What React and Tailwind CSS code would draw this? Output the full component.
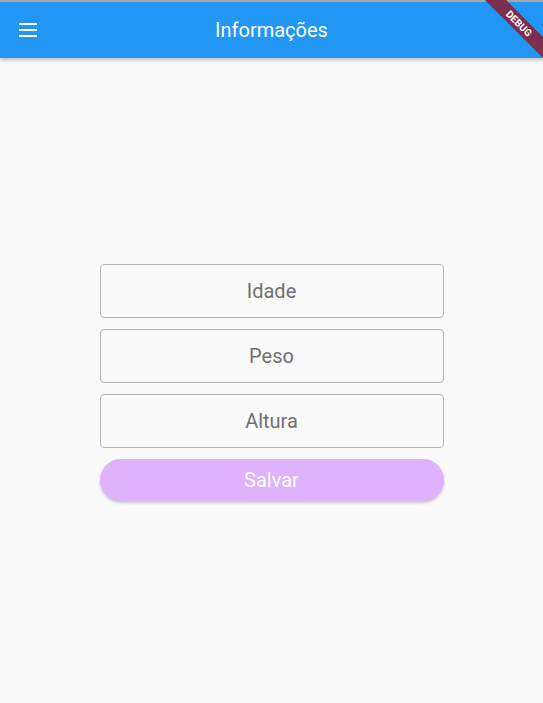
import React from "react";

const fields = ["Idade", "Peso", "Altura"];

export default function App() {
  return (
    <div className="relative h-[703px] w-[543px] overflow-hidden bg-[#fafafa] font-['Roboto',sans-serif]">
      <div className="h-[2px] bg-[#a9a9a9]" />
      <header className="relative z-10 flex h-[56px] items-center bg-[#2196f3] shadow-[0_2px_4px_rgba(0,0,0,0.25)]">
        <button className="ml-[19px] flex w-[18px] flex-col gap-[4px]">
          <span className="h-[2px] w-[18px] bg-white" />
          <span className="h-[2px] w-[18px] bg-white" />
          <span className="h-[2px] w-[18px] bg-white" />
        </button>
        <h1 className="absolute left-0 right-0 text-center text-[20px] text-white">
          Informações
        </h1>
      </header>

      <main className="flex flex-col items-center pt-[206px]">
        <div className="flex w-[344px] flex-col gap-[11px]">
          {fields.map((f) => (
            <input
              key={f}
              placeholder={f}
              className="h-[54px] w-full rounded-[4px] border border-[#b5b5b5] bg-transparent text-center text-[20px] text-[#707070] placeholder:text-[#707070] outline-none"
            />
          ))}
          <button className="h-[42px] w-full rounded-full bg-[#e0b1fc] text-[20px] text-white shadow-[0_2px_3px_rgba(0,0,0,0.2)]">
            Salvar
          </button>
        </div>
      </main>

      {/* debug ribbon */}
      <div className="pointer-events-none absolute left-[467px] top-[16px] z-20 flex h-[15px] w-[104px] rotate-45 items-center justify-center bg-[#7c2e4f] text-[10px] font-bold text-white">
        DEBUG
      </div>
    </div>
  );
}
